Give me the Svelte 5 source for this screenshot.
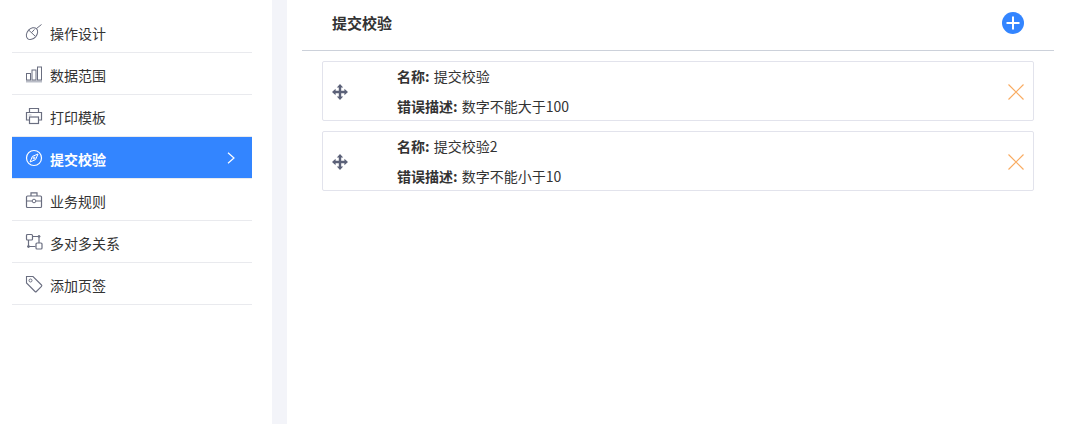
<script>
  const menu = [
    { key: 'mouse', label: '操作设计' },
    { key: 'bars', label: '数据范围' },
    { key: 'printer', label: '打印模板' },
    { key: 'compass', label: '提交校验', active: true },
    { key: 'case', label: '业务规则' },
    { key: 'nodes', label: '多对多关系' },
    { key: 'tag', label: '添加页签' }
  ];
  const rules = [
    { name: '提交校验', desc: '数字不能大于100' },
    { name: '提交校验2', desc: '数字不能小于10' }
  ];
</script>

<div class="page">
  <aside class="sidebar">
    <ul class="menu">
      {#each menu as item}
        <li class="row" class:active={item.active}>
          <svg class="icon" viewBox="0 0 18 18" fill="none" stroke="currentColor" stroke-width="1">
            {#if item.key === 'mouse'}
              <ellipse cx="7" cy="10.6" rx="4.8" ry="6.6" transform="rotate(42 7 10.6)" />
              <path d="M11.5 5.5 L16.5 1.5 M3.6 7 L10 13 M6.6 9.6 L9.5 6.4" />
            {:else if item.key === 'bars'}
              <path d="M1 16.5h16" stroke="#b9bcc6" stroke-width="2" />
              <rect x="1.5" y="8.5" width="4" height="6.5" />
              <rect x="7" y="5" width="4" height="10" />
              <rect x="12.5" y="2" width="4" height="13" />
            {:else if item.key === 'printer'}
              <path d="M4.5 5V1.5h9V5M4.5 13H1.5V5.5h15V13h-3" stroke-width="1.2" />
              <rect x="4.5" y="10" width="9" height="6.5" stroke-width="1.2" />
              <path d="M3.5 8h3" stroke="#b9bcc6" />
            {:else if item.key === 'compass'}
              <circle cx="9" cy="9" r="7.5" stroke-width="1.2" />
              <path d="M13 5 L10.6 10.6 L5 13 L7.4 7.4 Z" />
              <circle cx="9" cy="9" r="1" />
            {:else if item.key === 'case'}
              <rect x="1.5" y="5" width="15" height="11.5" rx="1" stroke-width="1.2" />
              <path d="M6 5V1.8h6V5M1.5 10h5.5M11 10h5.5" stroke-width="1.2" />
              <circle cx="9" cy="10" r="1.8" />
            {:else if item.key === 'nodes'}
              <rect x="1.5" y="1.5" width="6" height="5.5" rx="1" stroke-width="1.2" />
              <rect x="11" y="10" width="6" height="6" rx="1" stroke-width="1.2" />
              <path d="M7.5 3.5h5.5M14 5v5M3.5 7v6.5h7" stroke-width="1.2" />
              <circle cx="14" cy="3.5" r="1" fill="currentColor" />
              <circle cx="3.5" cy="13.5" r="1" fill="currentColor" />
            {:else}
              <path d="M1.5 1.5h6.5l8.5 8.5a1 1 0 0 1 0 1.4l-5.1 5.1a1 1 0 0 1-1.4 0l-8.5-8.5Z" stroke-width="1.1" />
              <circle cx="5.5" cy="5.5" r="1.5" />
            {/if}
          </svg>
          <span class="label">{item.label}</span>
          {#if item.active}
            <svg class="chev" viewBox="0 0 8 12" fill="none" stroke="#fff" stroke-width="1.2">
              <path d="M1 0.7 L7 6 L1 11.3" />
            </svg>
          {/if}
        </li>
      {/each}
    </ul>
  </aside>
  <div class="band"></div>
  <main class="main">
    <header class="head">
      <h2>提交校验</h2>
      <svg class="add" viewBox="0 0 22 22">
        <circle cx="11" cy="11" r="11" fill="#3385ff" />
        <path d="M11 4.5v13M4.5 11h13" stroke="#fff" stroke-width="2" />
      </svg>
    </header>
    <div class="cards">
      {#each rules as rule}
        <div class="card">
          <svg class="move" viewBox="0 0 16 16" fill="#5b6178">
            <path d="M8 0 L11.2 3.6 H9.2 V6.8 H12.4 V4.8 L16 8 L12.4 11.2 V9.2 H9.2 V12.4 H11.2 L8 16 L4.8 12.4 H6.8 V9.2 H3.6 V11.2 L0 8 L3.6 4.8 V6.8 H6.8 V3.6 H4.8 Z" />
          </svg>
          <div class="text">
            <div class="line"><b>名称:</b> {rule.name}</div>
            <div class="line"><b>错误描述:</b> {rule.desc}</div>
          </div>
          <svg class="close" viewBox="0 0 16 16" fill="none" stroke="#f9ab60" stroke-width="1.2">
            <path d="M0.5 0.5 L15.5 15.5 M15.5 0.5 L0.5 15.5" />
          </svg>
        </div>
      {/each}
    </div>
  </main>
</div>

<style>
  :global(body) {
    margin: 0;
    background: #fff;
  }
  .page {
    display: flex;
    height: 424px;
    font-family: "Noto Sans CJK SC", "Noto Sans", sans-serif;
    font-size: 14px;
    color: #333;
    overflow: hidden;
  }
  .sidebar {
    width: 272px;
    flex: none;
    box-sizing: border-box;
    padding: 11px 20px 0 12px;
  }
  .menu {
    list-style: none;
    margin: 0;
    padding: 0;
  }
  .row {
    height: 42px;
    box-sizing: border-box;
    border-bottom: 1px solid #e9eaee;
    display: flex;
    align-items: center;
    padding-left: 13px;
    color: #333;
  }
  .row .icon {
    width: 18px;
    height: 18px;
    color: #6a6e80;
    flex: none;
    margin-right: 7px;
    margin-top: 1px;
  }
  .row.active {
    background: #3385ff;
    color: #fff;
    font-weight: 700;
  }
  .row.active .icon {
    color: #fff;
  }
  .label {
    flex: 1;
    padding-top: 2px;
  }
  .chev {
    width: 8px;
    height: 12px;
    margin-right: 17px;
  }
  .band {
    width: 15px;
    flex: none;
    background: #f3f4f9;
  }
  .main {
    flex: 1;
    padding: 0 13px 0 15px;
    min-width: 0;
  }
  .head {
    height: 50px;
    border-bottom: 1px solid #ccd1da;
    display: flex;
    align-items: center;
    justify-content: space-between;
    padding: 0 30px;
  }
  .head h2 {
    margin: 0 0 5px;
    font-size: 15px;
    font-weight: 700;
    color: #333;
  }
  .add {
    width: 22px;
    height: 22px;
    margin-top: -4px;
  }
  .cards {
    display: flex;
    flex-direction: column;
    gap: 10px;
    padding: 10px 20px 0;
  }
  .card {
    height: 60px;
    box-sizing: border-box;
    border: 1px solid #e2e3ec;
    border-radius: 2px;
    display: flex;
    align-items: center;
    padding: 0 9px;
  }
  .move {
    width: 16px;
    height: 16px;
    flex: none;
    margin-top: 2px;
  }
  .text {
    flex: 1;
    padding-left: 49px;
    font-size: 14px;
    line-height: 30px;
  }
  .line {
    height: 30px;
  }
  .text b {
    font-weight: 700;
    margin-right: 1px;
  }
  .close {
    width: 16px;
    height: 16px;
    flex: none;
    margin-top: 2px;
  }
</style>
